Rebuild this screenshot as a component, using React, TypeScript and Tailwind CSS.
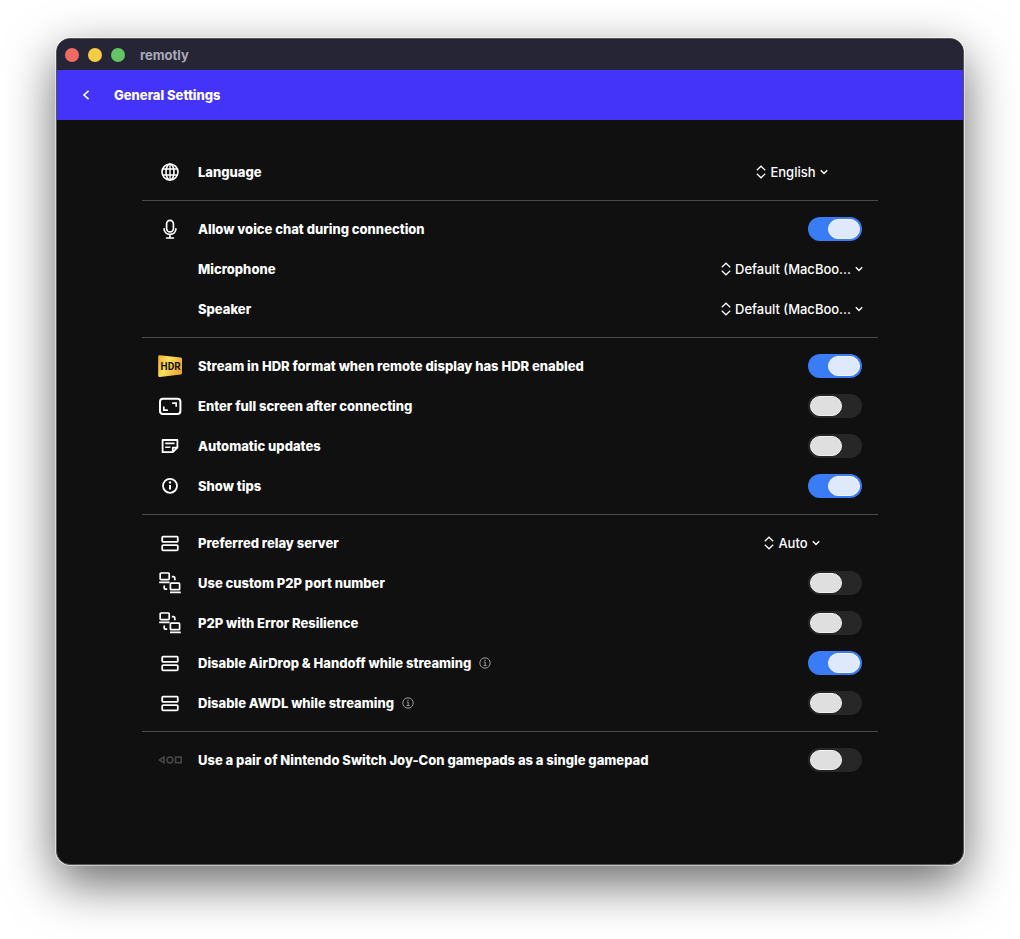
import { useState } from "react";
import type { ReactNode } from "react";

const GlobeIcon = () => (
  <svg width="24" height="24" viewBox="0 0 24 24" fill="none" stroke="currentColor" strokeWidth="1.6">
    <circle cx="12" cy="12" r="8" />
    <ellipse cx="12" cy="12" rx="4" ry="8" />
    <path d="M4.6 9h14.8M4.6 15h14.8M12 3.8v16.4" strokeWidth="1.4" />
  </svg>
);

const MicIcon = () => (
  <svg width="24" height="24" viewBox="0 0 24 24" fill="none" stroke="currentColor" strokeWidth="1.7" strokeLinecap="round">
    <rect x="8.6" y="3.3" width="6.8" height="11.6" rx="3.4" />
    <path d="M6.1 11.8c0 3.4 2.6 5.6 5.9 5.6s5.9-2.2 5.9-5.6M12 17.4v3.4M8.6 21h6.8" />
  </svg>
);

const HdrIcon = () => (
  <svg width="24" height="24" viewBox="0 0 24 24">
    <defs>
      <linearGradient id="hdr" x1="0" y1="0" x2="1" y2="0.4">
        <stop offset="0" stopColor="#f3a93a" />
        <stop offset="0.45" stopColor="#fbe25a" />
        <stop offset="1" stopColor="#f0a93c" />
      </linearGradient>
    </defs>
    <path d="M1.8 1.2 22.8 3.6q1.2.2 1.2 1.4v14q0 1.2-1.2 1.4L1.8 22.9Q.2 23 .2 21.4V2.6Q.2 1 1.8 1.2Z" fill="url(#hdr)" />
    <text x="12.6" y="15.8" textAnchor="middle" fontSize="10" fontWeight="700" fontFamily="Roboto, sans-serif" fill="#17130a">
      HDR
    </text>
  </svg>
);

const FullScreenIcon = () => (
  <svg width="24" height="24" viewBox="0 0 24 24" fill="none" stroke="currentColor" strokeWidth="2">
    <rect x="2" y="4.8" width="20.4" height="15.2" rx="3" />
    <path d="M14.2 9.2h4v3.6M9.8 16.2h-4v-3.6" strokeWidth="1.7" />
  </svg>
);

const NoteIcon = () => (
  <svg width="24" height="24" viewBox="0 0 24 24" fill="none" stroke="currentColor" strokeWidth="1.8" strokeLinejoin="round">
    <path d="M4.6 6h14.8v7.6l-4.6 4.6H4.6ZM14.8 18v-4.4h4.4" />
    <path d="M7.2 9.4h9.4M7.2 13.2h5.2" strokeWidth="1.6" />
  </svg>
);

const InfoIcon = () => (
  <svg width="24" height="24" viewBox="0 0 24 24" fill="none" stroke="currentColor" strokeWidth="1.8">
    <circle cx="12" cy="11.8" r="7" />
    <path d="M12 11v4.6" strokeWidth="2" />
    <circle cx="12" cy="8.4" r="1.2" fill="currentColor" stroke="none" />
  </svg>
);

const ServerIcon = () => (
  <svg width="24" height="24" viewBox="0 0 24 24" fill="none" stroke="currentColor" strokeWidth="1.8">
    <rect x="4.2" y="5.7" width="15.6" height="5.2" rx="1" />
    <rect x="4.2" y="14.1" width="15.6" height="5.2" rx="1" />
  </svg>
);

const PeersIcon = () => (
  <svg width="24" height="24" viewBox="0 0 24 24" fill="none" stroke="currentColor" strokeWidth="1.7">
    <rect x="2.2" y="2" width="9" height="6.6" rx="0.8" />
    <path d="M1.2 11.3h10.4M12 21.4h10.8" />
    <rect x="12.4" y="12.1" width="9.2" height="6.6" rx="0.8" />
    <path d="M13.8 5.6h1.4q1.6 0 1.6 1.6v2M9.2 18.2H8q-1.8 0-1.8-1.8v-2" />
  </svg>
);

const JoyConIcon = () => (
  <svg width="24" height="24" viewBox="0 0 24 24" fill="none" stroke="#484848" strokeWidth="1.5">
    <path d="M6 9 1.4 11.9 6 14.8Z" />
    <circle cx="12" cy="12" r="2.9" />
    <rect x="17.6" y="9.1" width="5.6" height="5.6" />
  </svg>
);

const TipIcon = () => (
  <svg width="12" height="12" viewBox="0 0 12 12" fill="none" stroke="#9a9a9a">
    <circle cx="6" cy="6" r="5.2" />
    <path d="M4.8 5.1h1.4v3.4M4.6 8.6h3" />
    <circle cx="6" cy="3.2" r="0.7" fill="#9a9a9a" stroke="none" />
  </svg>
);

type RowProps = {
  id: string;
  label: string;
  icon?: ReactNode;
  tip?: boolean;
  children: ReactNode;
};

const Row = ({ id, label, icon, tip, children }: RowProps) => (
  <div className="flex h-10 items-center gap-4 px-4">
    <span className="h-6 w-6 shrink-0">{icon}</span>
    <div className="flex flex-1 items-center gap-2">
      <label htmlFor={id} className="text-[13px] leading-5 font-extrabold">
        {label}
      </label>
      {tip && <TipIcon />}
    </div>
    {children}
  </div>
);

type SwitchRowProps = Omit<RowProps, "children"> & { on?: boolean };

const SwitchRow = ({ on = false, ...row }: SwitchRowProps) => {
  const [checked, setChecked] = useState(on);

  return (
    <Row {...row}>
      <input
        id={row.id}
        type="checkbox"
        role="switch"
        checked={checked}
        onChange={(e) => setChecked(e.target.checked)}
        className="flex h-6 w-[54px] shrink-0 appearance-none items-center rounded-full bg-[#272727] px-[2px] before:h-5 before:w-8 before:rounded-full before:border before:border-[#f0f0f0] before:bg-[#dfdfdf] checked:justify-end checked:bg-[#397cf6] checked:before:border-[#f0f5ff] checked:before:bg-[#dfe9fc]"
      />
    </Row>
  );
};

type SelectRowProps = Omit<RowProps, "children"> & { value: string };

const SelectRow = ({ value, ...row }: SelectRowProps) => (
  <Row {...row}>
    <div className="flex w-[140px] shrink-0 items-center justify-center">
      <svg width="10" height="14" viewBox="0 0 10 14" fill="none" stroke="currentColor" strokeWidth="1.2" className="mr-1 shrink-0">
        <path d="M0.8 5.2 5 1.2l4.2 4M0.8 8.8 5 12.8l4.2-4" />
      </svg>
      <select id={row.id} className="field-sizing-content appearance-none bg-transparent text-[13px] leading-5 font-medium">
        <option>{value}</option>
      </select>
      <svg width="8" height="6" viewBox="0 0 8 6" fill="none" stroke="currentColor" strokeWidth="1.4" className="ml-1 shrink-0">
        <path d="M0.8 1.2 4 4.4l3.2-3.2" />
      </svg>
    </div>
  </Row>
);

const Section = ({ children }: { children: ReactNode }) => (
  <section className="border-b border-[#4a4a4a] py-2 last:border-b-0">{children}</section>
);

const App = () => {
  return (
    <div className="min-h-screen bg-white px-14 pt-[38px] pb-[74px] font-['Inter',sans-serif] text-white">
      <div className="overflow-hidden rounded-[14px] border border-[#555] bg-[#101010] shadow-[0_0_0_1px_rgba(255,255,255,0.5),0_18px_50px_rgba(0,0,0,0.6)]">
        <div className="flex h-[31px] items-center bg-[#262536] px-2">
          <div className="flex gap-[9px]">
            <span className="h-[14px] w-[14px] rounded-full bg-[#ef6965]" />
            <span className="h-[14px] w-[14px] rounded-full bg-[#f6cc45]" />
            <span className="h-[14px] w-[14px] rounded-full bg-[#63c466]" />
          </div>
          <p className="ml-[15px] text-[13px] leading-5 font-bold text-[#a9a8b8]">remotly</p>
        </div>

        <header className="flex h-[50px] items-center bg-[#4433f8] px-6">
          <button aria-label="Back" className="flex h-6 w-[10px] items-center justify-center">
            <svg width="8" height="10" viewBox="0 0 8 10" fill="none" stroke="currentColor" strokeWidth="1.6">
              <path d="M6.6 0.8 2 5l4.6 4.2" />
            </svg>
          </button>
          <h1 className="ml-[23px] text-[13px] leading-5 font-extrabold">General Settings</h1>
        </header>

        <main className="mx-auto max-w-[736px] pt-6 pb-[76px]">
          <Section>
            <SelectRow id="language" label="Language" icon={<GlobeIcon />} value="English" />
          </Section>
          <Section>
            <SwitchRow id="voice" label="Allow voice chat during connection" icon={<MicIcon />} on />
            <SelectRow id="microphone" label="Microphone" value="Default (MacBoo..." />
            <SelectRow id="speaker" label="Speaker" value="Default (MacBoo..." />
          </Section>
          <Section>
            <SwitchRow id="stream" label="Stream in HDR format when remote display has HDR enabled" icon={<HdrIcon />} on />
            <SwitchRow id="fullscreen" label="Enter full screen after connecting" icon={<FullScreenIcon />} />
            <SwitchRow id="updates" label="Automatic updates" icon={<NoteIcon />} />
            <SwitchRow id="tips" label="Show tips" icon={<InfoIcon />} on />
          </Section>
          <Section>
            <SelectRow id="relay" label="Preferred relay server" icon={<ServerIcon />} value="Auto" />
            <SwitchRow id="port" label="Use custom P2P port number" icon={<PeersIcon />} />
            <SwitchRow id="resilience" label="P2P with Error Resilience" icon={<PeersIcon />} />
            <SwitchRow id="airdrop" label="Disable AirDrop & Handoff while streaming" icon={<ServerIcon />} tip on />
            <SwitchRow id="awdl" label="Disable AWDL while streaming" icon={<ServerIcon />} tip />
          </Section>
          <Section>
            <SwitchRow id="joycon" label="Use a pair of Nintendo Switch Joy-Con gamepads as a single gamepad" icon={<JoyConIcon />} />
          </Section>
        </main>
      </div>
    </div>
  );
};

export default App;
